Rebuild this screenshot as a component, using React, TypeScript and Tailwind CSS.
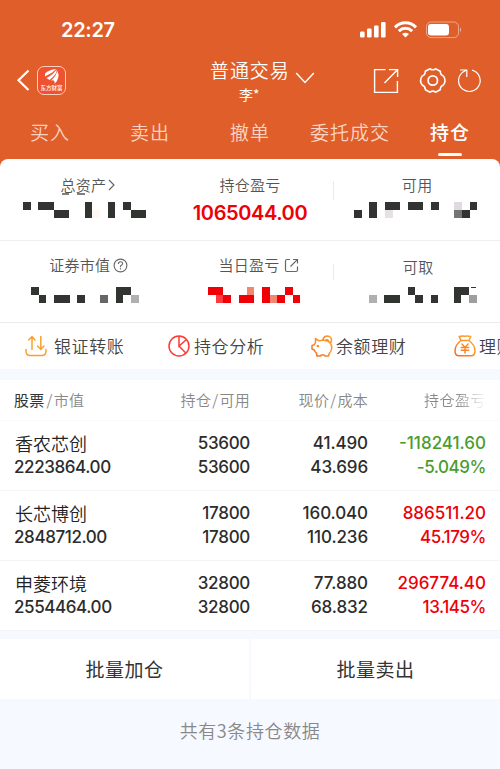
import React from "react";

type Cell = [col: number, row: number, width: number, height: number, fill: string];

const DARK = "#323431";
const RED = "#f00007";

/** Pixelated block that hides a private amount. */
function Mosaic({ cols, cells, className }: { cols: number; cells: Cell[]; className: string }) {
  const u = 7.7;
  return (
    <svg width={cols * u} height={16} className={"block shrink-0 " + className} shapeRendering="crispEdges">
      {cells.map(([c, r, w, h, fill], i) => (
        <rect key={i} x={c * u} y={r * 8} width={w * u} height={h * 8} fill={fill} />
      ))}
    </svg>
  );
}

const assets: Cell[] = [
  [0, 0, 1, 1, DARK], [2, 0, 2, 1, DARK], [4, 1, 2, 1, DARK], [8, 0, 1, 2, DARK],
  [9, 1, 1, 1, "#fff7ef"], [11, 0, 1, 2, DARK], [13, 0, 1, 1, DARK], [14, 1, 2, 1, DARK],
];
const usable: Cell[] = [
  [0, 1, 1, 1, DARK], [2, 0, 1, 2, DARK], [4, 0, 2, 1, DARK], [4, 1, 1, 1, "#e6e1e4"],
  [7, 0, 2, 1, DARK], [10, 0, 1, 1, DARK], [13, 0, 1, 1, "#dfdadf"], [13, 1, 1, 1, "#737573"],
  [14, 1, 1, 1, DARK], [15, 0, 1, 1, DARK],
];
const marketValue: Cell[] = [
  [0, 0, 1, 1, DARK], [1, 1, 1, 1, DARK], [3, 1, 2, 1, DARK], [6, 1, 1, 1, DARK],
  [9, 1, 1, 1, "#666866"], [11, 0, 2, 1, DARK], [11, 1, 1, 1, DARK], [13, 1, 1, 1, "#b0b0b0"],
];
const dayProfit: Cell[] = [
  [0, 0, 2, 1, RED], [1, 1, 1, 1, "#fb3b40"], [2, 1, 1, 1, RED], [4, 1, 2, 1, RED],
  [5, 0, 1, 1, "#f2866e"], [7, 0, 1, 2, RED], [8, 1, 1, 1, "#f2866e"], [9, 1, 1, 1, RED],
  [10, 0, 1, 1, RED], [11, 1, 1, 1, RED],
];
const withdrawable: Cell[] = [
  [0, 1, 1, 1, "#b0b0b0"], [2, 1, 2, 1, DARK], [5, 0, 1, 1, DARK], [6, 1, 1, 1, DARK],
  [8, 1, 1, 1, DARK], [11, 0, 2, 1, DARK], [11, 1, 1, 1, DARK], [13, 1, 1, 1, "#9e9e9e"],
  [13.2, 0, 0.65, 0.13, DARK],
];

function StatusBar() {
  return (
    <div className="flex h-[60px] items-center pl-[61px] pr-[37px]">
      <span className="font-[Inter] text-[20px] font-semibold leading-[60px] tracking-[-0.3px]">22:27</span>
      <svg className="ml-auto" width="104" height="20" viewBox="0 0 104 20" fill="#fff">
        <rect x="1" y="11.5" width="4.6" height="6" rx="1.2" />
        <rect x="8" y="8.5" width="4.6" height="9" rx="1.2" />
        <rect x="15" y="5.5" width="4.6" height="12" rx="1.2" />
        <rect x="22" y="2" width="4.6" height="15.5" rx="1.2" />
        <g fill="none" stroke="#fff" strokeWidth="3">
          <path d="M36 7.4 C42 1.2 51 1.2 57 7.4" />
          <path d="M39.8 11.2 C43.8 7.4 49.2 7.4 53.2 11.2" />
        </g>
        <path d="M46.5 17.5 L43 14 Q46.5 11.4 50 14 Z" />
        <rect x="67.5" y="2" width="32" height="15.6" rx="4.6" fill="none" stroke="#fff" strokeOpacity=".45" />
        <rect x="69" y="4" width="21" height="11.4" rx="3" />
        <path d="M101 7.3 Q103.4 9.8 101 12.3 Z" fillOpacity=".5" />
      </svg>
    </div>
  );
}

function TitleBar() {
  return (
    <div className="grid h-[50px] grid-cols-[205px_1fr_132px]">
      <div className="flex pl-[16px] pt-[6px]">
        <svg width="14" height="28" viewBox="0 0 14 28" fill="none" stroke="#fff" strokeWidth="2.2">
          <path d="M12.5 4.5 L2.5 14.3 L12.5 24" />
        </svg>
        <div className="ml-[7px] flex h-[29px] w-[29px] flex-col items-center rounded-[7px] border border-[#fbd0bf] bg-[#ee5230]">
          <svg width="19" height="18" viewBox="0 0 19 18" fill="#fff" className="shrink-0">
            <path d="M3 6.5 Q7 2.5 14 2 Q12 5 3 9.5 Z" />
            <path d="M4.5 11 Q11 8 14.5 2.5 Q15.5 7 7.5 13 Z" />
            <path d="M9 13.5 Q14 9.5 15.2 4 Q19 10 12.5 17 Q13.5 12.5 9 13.5 Z" />
          </svg>
          <span className="mt-[-1px] whitespace-nowrap text-[5.5px] font-medium leading-[8px]">东方财富</span>
        </div>
      </div>
      <div className="flex flex-col">
        <div className="flex h-[23px] items-center pl-[5px]">
          <span className="mt-[-3px] text-[19px] leading-[24px] tracking-[0.9px]">普通交易</span>
          <svg className="ml-[5px] mt-[13px]" width="20" height="14" viewBox="0 0 20 14" fill="none" stroke="#fff" strokeWidth="1.5">
            <path d="M1.2 2 L10 11.5 L18.8 2" />
          </svg>
        </div>
        <span className="pl-[34px] text-[14px] font-normal leading-[22px]">李*</span>
      </div>
      <svg width="132" height="40" viewBox="368 60 132 40" fill="none" stroke="#fff" strokeWidth="1.4">
        <path d="M385.5 69.6 H374.6 V92.4 H397.4 V81" />
        <path d="M389 69.6 H397.6 V77 M397.4 69.8 L384.5 83" />
        <path d="M430.1 68.8 Q432.8 70.8 435.5 68.8 L440.3 71.3 Q440.3 75 443.5 76.1 Q446.5 80.5 443.5 84.9 Q440.2 86.1 440.2 89.7 L435.6 92.2 Q432.8 90 430 92.2 L425.4 89.7 Q425.2 86.1 422.1 84.9 Q419.1 80.5 422.1 76.1 Q425.3 75 425.3 71.3 Z" strokeWidth="1.6" strokeLinejoin="round" />
        <circle cx="432.8" cy="80.5" r="4.7" strokeWidth="1.7" />
        <path d="M472 70.2 A10.8 10.8 0 1 1 462.2 72.6 L466.2 70.2 M460 70 H466.8 V77" strokeWidth="1.2" />
      </svg>
    </div>
  );
}

function Tabs() {
  return (
    <nav className="grid h-[49px] grid-cols-5 text-center text-[19px] leading-[44px] tracking-[1px] text-[#fbd3c1]">
      <span>买入</span>
      <span>卖出</span>
      <span>撤单</span>
      <span>委托成交</span>
      <span className="flex flex-col items-center font-medium text-white">
        持仓
        <i className="mt-[-1px] h-[3px] w-[24px] shrink-0 rounded-full bg-white" />
      </span>
    </nav>
  );
}

function Label({ children }: { children: React.ReactNode }) {
  return <div className="flex h-[22px] items-center justify-center text-[15px] leading-[22px] tracking-[0.3px] text-[#555]">{children}</div>;
}

function Summary() {
  return (
    <section>
      <div className="grid h-[82px] grid-cols-3 border-b border-[#efefef] pt-[15px]">
        <div className="flex flex-col">
          <div className="pl-[10px]">
            <Label>
              总资产
              <svg width="9" height="14" viewBox="0 0 9 14" fill="none" stroke="#666" strokeWidth="1.2" className="ml-px">
                <path d="M2 2 L7 7 L2 12" />
              </svg>
            </Label>
          </div>
          <svg width="24" height="2" className="ml-[61px] mt-[-3px] shrink-0"><path d="M1 1 H8 M16 1 H24" stroke="#555" strokeWidth="1.3" /></svg>
          <Mosaic cols={16} cells={assets} className="ml-[23px] mt-[7px]" />
        </div>
        <div className="flex flex-col">
          <Label>持仓盈亏</Label>
          <span className="mt-[3px] text-center font-[Inter] text-[20px] font-semibold leading-[28px] tracking-[-0.4px] text-[#ee0008]">1065044.00</span>
        </div>
        <div className="flex">
          <i className="mt-[7px] h-[19px] w-px bg-[#ebebeb]" />
          <div className="flex flex-1 flex-col">
            <Label>可用</Label>
            <Mosaic cols={16} cells={usable} className="ml-[20px] mt-[6px]" />
          </div>
        </div>
      </div>
      <div className="grid h-[82px] grid-cols-3 border-b border-[#ebebeb] pt-[13px]">
        <div className="flex flex-col">
          <div className="pl-[11px]">
            <Label>
              证券市值
              <svg width="15" height="15" viewBox="0 0 15 15" fill="none" stroke="#666" strokeWidth="1.1" className="ml-[3px]">
                <circle cx="7.5" cy="7.5" r="6.4" />
                <path d="M5.4 6 Q5.4 3.8 7.5 3.8 T9.6 5.8 Q9.6 6.8 7.5 8 V9.2 M7.5 10.2 V11.5" />
              </svg>
            </Label>
          </div>
          <Mosaic cols={14} cells={marketValue} className="ml-[31px] mt-[11px]" />
        </div>
        <div className="flex flex-col">
          <div className="pl-[17px]">
            <Label>
              当日盈亏
              <svg width="15" height="15" viewBox="0 0 15 15" fill="none" stroke="#666" strokeWidth="1.2" className="ml-[4px]">
                <path d="M6 1.5 H3 Q1.5 1.5 1.5 3 V12 Q1.5 13.5 3 13.5 H12 Q13.5 13.5 13.5 12 V8.5 M9 1.5 H13.5 V5.5 M13.3 1.7 L6.5 8.5" />
              </svg>
            </Label>
          </div>
          <Mosaic cols={12} cells={dayProfit} className="ml-[41px] mt-[11px]" />
        </div>
        <div className="flex">
          <i className="mt-[10px] h-[16px] w-px bg-[#ebebeb]" />
          <div className="flex flex-1 flex-col pt-[2px]">
            <div className="pl-[2px]"><Label>可取</Label></div>
            <Mosaic cols={14} cells={withdrawable} className="ml-[35px] mt-[9px]" />
          </div>
        </div>
      </div>
    </section>
  );
}

function Shortcuts() {
  return (
    <div className="flex h-[46px] items-center overflow-hidden whitespace-nowrap pl-[25px] text-[17px] leading-[44px] tracking-[0.6px] text-[#444]">
      <div className="flex w-[143px] shrink-0 items-center gap-[7px]">
        <svg width="22" height="22" viewBox="0 0 22 22" fill="none" stroke="#f9a12f" strokeWidth="1.5" strokeLinecap="round">
          <path d="M1 14.5 V16 Q1 20.5 5 20.5 H17 Q21 20.5 21 16 V14.5 M7 14.5 V2 M3.7 5 L7 1.5 L10 5 M15.8 1.5 V14 M12.5 11 L15.8 14.5 L19 11" />
        </svg>
        银证转账
      </div>
      <div className="flex w-[143px] shrink-0 items-center gap-[4px]">
        <svg width="22" height="22" viewBox="0 0 22 22" fill="none" stroke="#fa3c35" strokeWidth="1.5">
          <circle cx="11" cy="11" r="10" />
          <path d="M11 1 V11 L18.5 4.5 M11 11 L17.8 18" />
        </svg>
        持仓分析
      </div>
      <div className="flex w-[143px] shrink-0 items-center gap-[3px]">
        <svg width="22" height="22" viewBox="0 0 22 22" fill="none" stroke="url(#warm)" strokeWidth="1.5" strokeLinejoin="round">
          <defs>
            <linearGradient id="warm" x1="0" y1="1" x2="1" y2="0"><stop stopColor="#f46a24" /><stop offset="1" stopColor="#fcae31" /></linearGradient>
          </defs>
          <path d="M4.5 3.5 L8 5.8 Q10 5 13 5.2 Q20.8 6 20.8 13 Q20.5 16.2 18.3 18.2 L17.5 21 H14 L13.2 20 H10.2 L9.5 21 H6 L5.5 18.2 Q4 17.2 3.2 15 L1 14 V10.5 L3.2 9.8 L4.5 7.5 Z" />
          <path d="M12 5.2 Q12.3 1 16.5 1 Q20.5 1.5 20.5 5.3 L19.8 8 M14.5 5.5 Q16.5 3.5 17.8 6.5" />
          <circle cx="7" cy="11" r=".6" />
        </svg>
        余额理财
      </div>
      <div className="flex shrink-0 items-center gap-[3px]">
        <svg width="22" height="22" viewBox="0 0 22 22" fill="none" stroke="url(#warm)" strokeWidth="1.5" strokeLinejoin="round" strokeLinecap="round">
          <path d="M7 5.5 L5.2 1.5 Q8 .6 11 1.2 Q14 .6 16.8 1.5 L15 5.5 Z M7 5.5 Q1 10 1 16 Q1 20.8 5 20.8 H17 Q21 20.8 21 16 Q21 10 15 5.5 M8 9 L11 12.4 L14 9 M7.3 12.5 H14.7 M7.3 15.3 H14.7 M11 12.4 V18" />
        </svg>
        理财
      </div>
    </div>
  );
}

const holdings = [
  { name: "香农芯创", value: "2223864.00", qty: "53600", price: "41.490", cost: "43.696", profit: "-118241.60", pct: "-5.049%", color: "text-[#4a9d2d]" },
  { name: "长芯博创", value: "2848712.00", qty: "17800", price: "160.040", cost: "110.236", profit: "886511.20", pct: "45.179%", color: "text-[#ee0008]" },
  { name: "申菱环境", value: "2554464.00", qty: "32800", price: "77.880", cost: "68.832", profit: "296774.40", pct: "13.145%", color: "text-[#ee0008]" },
];

function Holdings() {
  return (
    <section className="bg-white">
      <div className="grid h-[41px] grid-cols-[150px_100px_118px_118px] border-b border-[#fafafa] text-right text-[15px] leading-[40px] tracking-[0.3px] text-[#888]">
        <span className="pl-[14px] text-left"><b className="font-normal text-[#333]">股票</b><span className="pl-[2px] pr-px">/</span>市值</span>
        <span>持仓<span className="px-px">/</span>可用</span>
        <span>现价<span className="px-px">/</span>成本</span>
        <span className="bg-gradient-to-r from-[#888] from-75% to-white bg-clip-text tracking-[0.5px] text-transparent">持仓盈亏</span>
      </div>
      {holdings.map((h) => (
        <div key={h.name} className="grid h-[70px] grid-cols-[150px_100px_118px_118px] grid-rows-[24px_24px] border-b border-[#f4f4f4] pt-[10px] text-right font-[Inter] text-[17px] font-medium leading-[25px] text-[#2c2c2c]">
          <span className="pl-[15px] text-left font-['Noto_Sans_CJK_SC',sans-serif] text-[18px] font-[350] text-[#222]">{h.name}</span>
          <span className="tracking-[-0.3px]">{h.qty}</span>
          <span className="tracking-[-0.1px]">{h.price}</span>
          <span className={h.color}>{h.profit}</span>
          <span className="pl-[14px] text-left tracking-[-0.4px]">{h.value}</span>
          <span className="tracking-[-0.3px]">{h.qty}</span>
          <span className="tracking-[-0.1px]">{h.cost}</span>
          <span className={"tracking-[-0.45px] " + h.color}>{h.pct}</span>
        </div>
      ))}
    </section>
  );
}

export default function App() {
  return (
    <div className="h-[769px] w-[500px] overflow-hidden bg-[#f6f9ff] font-['Noto_Sans_CJK_SC',sans-serif] font-[350]">
      <div className="bg-[#df5e29]">
        <header className="text-white">
          <StatusBar />
          <TitleBar />
          <Tabs />
        </header>
        <div className="rounded-t-[8px] bg-white">
          <Summary />
          <Shortcuts />
        </div>
      </div>
      <div className="h-[11px]" />
      <Holdings />
      <div className="mt-[8px] grid h-[59px] grid-cols-2 gap-[2px] text-center text-[19px] font-normal leading-[60px] tracking-[0.5px] text-[#333]">
        <span className="bg-white">批量加仓</span>
        <span className="bg-white">批量卖出</span>
      </div>
      <p className="text-center text-[18px] leading-[65px] tracking-[0.6px] text-[#888]">共有3条持仓数据</p>
    </div>
  );
}
